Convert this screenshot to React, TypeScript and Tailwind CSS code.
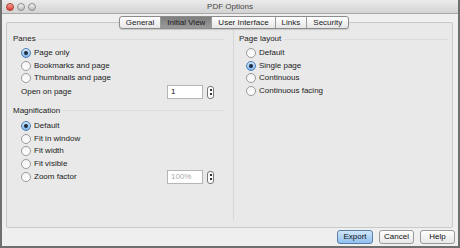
import React from 'react';

const font = { fontFamily: '"Liberation Sans", Arial, sans-serif' };

function Radio({ label, checked }: { label: string; checked?: boolean }) {
  return (
    <div className="flex items-center h-[12.7px] gap-[3px]">
      <span
        className={
          'w-[10px] h-[10px] rounded-full border flex items-center justify-center shrink-0 ' +
          (checked
            ? 'border-[#4d7fb8] bg-gradient-to-b from-[#cfe4fa] to-[#7fb4ea]'
            : 'border-[#9a9a9a] bg-gradient-to-b from-[#f4f4f4] to-[#ffffff]')
        }
      >
        {checked && <span className="w-[4px] h-[4px] rounded-full bg-[#1d2c40]" />}
      </span>
      <span className="text-[8px] text-[#1a1a1a] leading-none">{label}</span>
    </div>
  );
}

function Stepper() {
  return (
    <div className="w-[7px] h-[13px] rounded-[3px] border border-[#777] bg-white flex flex-col items-center justify-center gap-[2px]">
      <span className="w-[2px] h-[2px] bg-[#333]" />
      <span className="w-[2px] h-[2px] bg-[#333]" />
    </div>
  );
}

function Field({ value, disabled }: { value: string; disabled?: boolean }) {
  return (
    <div className="flex items-center gap-[4px]">
      <div
        className={
          'w-[36px] h-[14px] border border-[#b5b5b5] bg-white flex items-center px-[3px] text-[8px] leading-none ' +
          (disabled ? 'text-[#aaaaaa]' : 'text-[#111]')
        }
      >
        {value}
      </div>
      <Stepper />
    </div>
  );
}

function Section({ title }: { title: string }) {
  return (
    <div className="flex items-center gap-[3px] h-[12px]">
      <span className="text-[8px] text-[#222] leading-none">{title}</span>
      <span className="flex-1 h-px bg-[#dcdcdc]" />
    </div>
  );
}

const tabs = ['General', 'Initial View', 'User Interface', 'Links', 'Security'];

export default function App() {
  return (
    <div style={font} className="w-[460px] h-[248px] bg-white">
      <div className="w-[460px] h-[248px] flex flex-col bg-[#efefef] border-l-2 border-r-2 border-b-2 border-[#6f6f6f]">
        {/* title bar */}
        <div className="h-[14px] shrink-0 flex items-center relative bg-gradient-to-b from-[#ebebeb] to-[#d3d3d3] border-b border-[#a8a8a8]">
          <div className="flex gap-[3px] pl-[4px]">
            <span className="w-[8px] h-[8px] rounded-full bg-gradient-to-b from-[#f7a29a] to-[#d63a2e] border border-[#a8392f]" />
            <span className="w-[8px] h-[8px] rounded-full bg-gradient-to-b from-[#f2f2f2] to-[#bdbdbd] border border-[#8e8e8e]" />
            <span className="w-[8px] h-[8px] rounded-full bg-gradient-to-b from-[#f2f2f2] to-[#bdbdbd] border border-[#8e8e8e]" />
          </div>
          <div className="absolute inset-0 flex items-center justify-center text-[8px] text-[#444]">PDF Options</div>
        </div>

        {/* tabs */}
        <div className="flex justify-center pt-[2px] relative z-10 -mb-[7px] pl-[8px]">
          <div className="flex h-[13px] rounded-[3px] border border-[#8c8c8c] overflow-hidden bg-gradient-to-b from-[#ffffff] to-[#e6e6e6] shadow-[0_1px_1px_rgba(0,0,0,0.15)]">
            {tabs.map((t, i) => (
              <div
                key={t}
                className={
                  'flex items-center px-[6px] text-[8px] leading-none ' +
                  (i > 0 ? 'border-l border-[#9a9a9a] ' : '') +
                  (t === 'Initial View'
                    ? 'bg-gradient-to-b from-[#7e7e7e] to-[#9a9a9a] text-[#1a1a1a]'
                    : 'text-[#1a1a1a]')
                }
              >
                {t}
              </div>
            ))}
          </div>
        </div>

        {/* panel */}
        <div className="mx-[4px] mr-[5px] h-[206px] shrink-0 border border-[#c9c9c9] rounded-[2px] bg-[#e9e9e9] flex">
          <div className="w-[226px] pt-[10px] pl-[6px] pr-[8px]">
            <Section title="Panes" />
            <div className="pl-[8px] pt-[1.5px]">
              <Radio label="Page only" checked />
              <Radio label="Bookmarks and page" />
              <Radio label="Thumbnails and page" />
            </div>
            <div className="flex items-center justify-between pl-[8px] pr-[11px] h-[15px]">
              <span className="text-[8px] text-[#1a1a1a] leading-none">Open on page</span>
              <Field value="1" />
            </div>
            <div className="mt-[5px]">
              <Section title="Magnification" />
            </div>
            <div className="pl-[8px] pt-[3px]">
              <Radio label="Default" checked />
              <Radio label="Fit in window" />
              <Radio label="Fit width" />
              <Radio label="Fit visible" />
              <div className="flex items-center justify-between pr-[11px]">
                <Radio label="Zoom factor" />
                <Field value="100%" disabled />
              </div>
            </div>
          </div>
          <div className="w-px bg-[#d6d6d6] mb-[7px]" />
          <div className="flex-1 pt-[10px] pl-[5px] pr-[4px]">
            <Section title="Page layout" />
            <div className="pl-[7px] pt-[1.5px]">
              <Radio label="Default" />
              <Radio label="Single page" checked />
              <Radio label="Continuous" />
              <Radio label="Continuous facing" />
            </div>
          </div>
        </div>

        {/* buttons */}
        <div className="flex justify-end gap-[6px] pr-[3px] pt-[2px]">
          <button className="w-[36px] h-[14px] rounded-[3px] border border-[#5a7fa8] bg-gradient-to-b from-[#cfe5fb] to-[#8fc0ef] text-[8px] leading-none text-[#111]">
            Export
          </button>
          <button className="w-[35px] h-[14px] rounded-[3px] border border-[#9a9a9a] bg-gradient-to-b from-[#ffffff] to-[#e8e8e8] text-[8px] leading-none text-[#111]">
            Cancel
          </button>
          <button className="w-[35px] h-[14px] rounded-[3px] border border-[#9a9a9a] bg-gradient-to-b from-[#ffffff] to-[#e8e8e8] text-[8px] leading-none text-[#111]">
            Help
          </button>
        </div>
      </div>
    </div>
  );
}
